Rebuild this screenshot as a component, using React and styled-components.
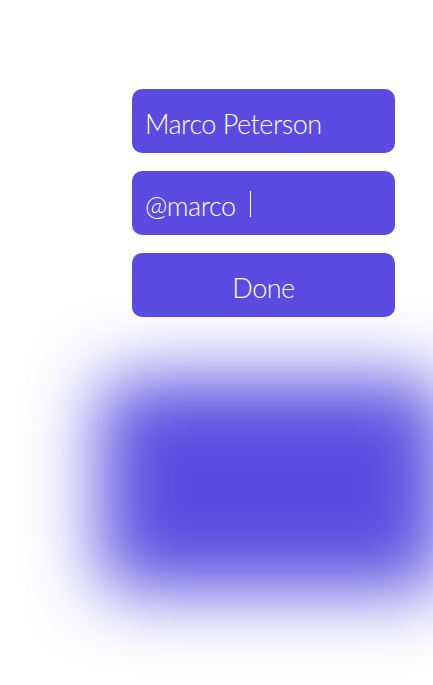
import React from "react";
import styled, { createGlobalStyle } from "styled-components";

const Global = createGlobalStyle`
  html, body { margin: 0; padding: 0; background: #ffffff; }
  body { font-family: Lato, "Open Sans", sans-serif; overflow: hidden; }
`;

const Page = styled.div`
  width: 433px;
  height: 685px;
  overflow: hidden;
  padding: 89px 0 0 132px;
  box-sizing: border-box;
`;

const Stack = styled.div`
  display: flex;
  flex-direction: column;
  gap: 18px;
  width: 263px;
`;

const Field = styled.div`
  height: 64px;
  border-radius: 10px;
  background: #5b4be0;
  color: #ffffff;
  display: flex;
  align-items: center;
  justify-content: ${(p) => (p.$center ? "center" : "flex-start")};
  padding: 5px ${(p) => (p.$center ? "0" : "13px")} 0;
  box-sizing: border-box;
  font-size: 27px;
  font-weight: 300;
  letter-spacing: -0.5px;
`;

const Caret = styled.span`
  display: inline-block;
  width: 1.5px;
  height: 26px;
  background: #ffffff;
  margin: -4px 0 0 14px;
`;

const Blob = styled.div`
  width: 345px;
  height: 212px;
  margin: 62px 0 0 -32px;
  border-radius: 24px;
  background: #5b4be0;
  filter: blur(36px);
`;

export default function App() {
  return (
    <>
      <Global />
      <Page>
        <Stack>
          <Field>Marco Peterson</Field>
          <Field>
            @marco
            <Caret />
          </Field>
          <Field $center>Done</Field>
        </Stack>
        <Blob />
      </Page>
    </>
  );
}
